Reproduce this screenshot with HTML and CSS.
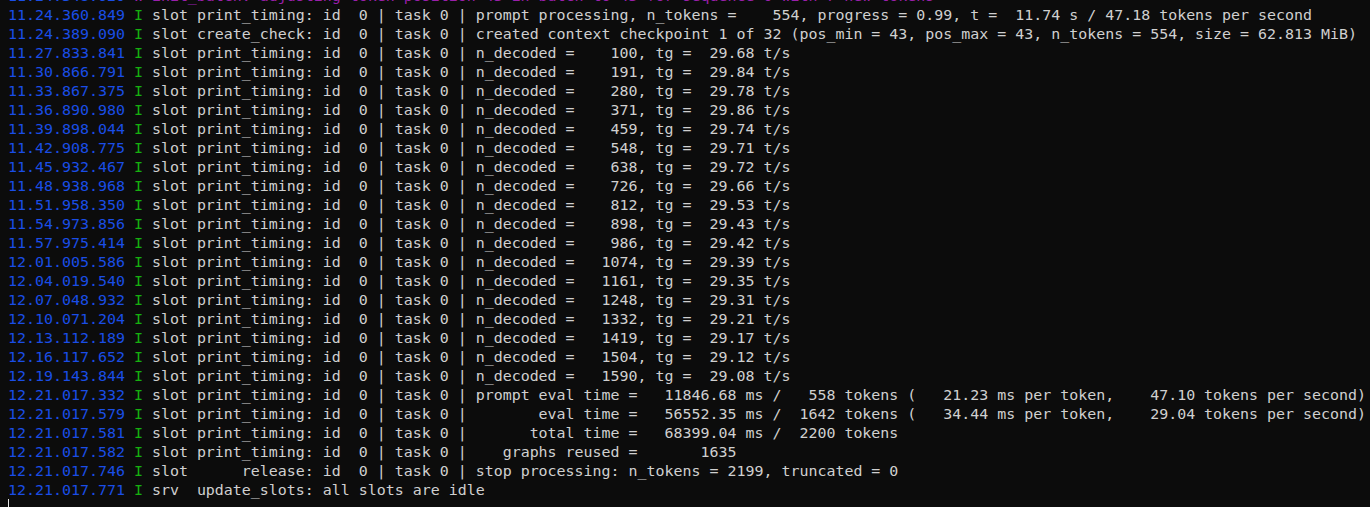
FILE: index.html
```html
<!DOCTYPE html>
<html>
<head>
<meta charset="utf-8">
<link rel="stylesheet" href="styles.css">
</head>
<body>
<div class="term">
<div class="line warn"><span class="ts">11.24.348.620</span> W init_batch: adjusting token position 43 in batch to 43 for sequence 0 with 7 new tokens</div>
<div class="line"><span class="ts">11.24.360.849</span> <span class="lvl">I</span> slot print_timing: id  0 | task 0 | prompt processing, n_tokens =    554, progress = 0.99, t =  11.74 s / 47.18 tokens per second</div>
<div class="line"><span class="ts">11.24.389.090</span> <span class="lvl">I</span> slot create_check: id  0 | task 0 | created context checkpoint 1 of 32 (pos_min = 43, pos_max = 43, n_tokens = 554, size = 62.813 MiB)</div>
<div class="line"><span class="ts">11.27.833.841</span> <span class="lvl">I</span> slot print_timing: id  0 | task 0 | n_decoded =    100, tg =  29.68 t/s</div>
<div class="line"><span class="ts">11.30.866.791</span> <span class="lvl">I</span> slot print_timing: id  0 | task 0 | n_decoded =    191, tg =  29.84 t/s</div>
<div class="line"><span class="ts">11.33.867.375</span> <span class="lvl">I</span> slot print_timing: id  0 | task 0 | n_decoded =    280, tg =  29.78 t/s</div>
<div class="line"><span class="ts">11.36.890.980</span> <span class="lvl">I</span> slot print_timing: id  0 | task 0 | n_decoded =    371, tg =  29.86 t/s</div>
<div class="line"><span class="ts">11.39.898.044</span> <span class="lvl">I</span> slot print_timing: id  0 | task 0 | n_decoded =    459, tg =  29.74 t/s</div>
<div class="line"><span class="ts">11.42.908.775</span> <span class="lvl">I</span> slot print_timing: id  0 | task 0 | n_decoded =    548, tg =  29.71 t/s</div>
<div class="line"><span class="ts">11.45.932.467</span> <span class="lvl">I</span> slot print_timing: id  0 | task 0 | n_decoded =    638, tg =  29.72 t/s</div>
<div class="line"><span class="ts">11.48.938.968</span> <span class="lvl">I</span> slot print_timing: id  0 | task 0 | n_decoded =    726, tg =  29.66 t/s</div>
<div class="line"><span class="ts">11.51.958.350</span> <span class="lvl">I</span> slot print_timing: id  0 | task 0 | n_decoded =    812, tg =  29.53 t/s</div>
<div class="line"><span class="ts">11.54.973.856</span> <span class="lvl">I</span> slot print_timing: id  0 | task 0 | n_decoded =    898, tg =  29.43 t/s</div>
<div class="line"><span class="ts">11.57.975.414</span> <span class="lvl">I</span> slot print_timing: id  0 | task 0 | n_decoded =    986, tg =  29.42 t/s</div>
<div class="line"><span class="ts">12.01.005.586</span> <span class="lvl">I</span> slot print_timing: id  0 | task 0 | n_decoded =   1074, tg =  29.39 t/s</div>
<div class="line"><span class="ts">12.04.019.540</span> <span class="lvl">I</span> slot print_timing: id  0 | task 0 | n_decoded =   1161, tg =  29.35 t/s</div>
<div class="line"><span class="ts">12.07.048.932</span> <span class="lvl">I</span> slot print_timing: id  0 | task 0 | n_decoded =   1248, tg =  29.31 t/s</div>
<div class="line"><span class="ts">12.10.071.204</span> <span class="lvl">I</span> slot print_timing: id  0 | task 0 | n_decoded =   1332, tg =  29.21 t/s</div>
<div class="line"><span class="ts">12.13.112.189</span> <span class="lvl">I</span> slot print_timing: id  0 | task 0 | n_decoded =   1419, tg =  29.17 t/s</div>
<div class="line"><span class="ts">12.16.117.652</span> <span class="lvl">I</span> slot print_timing: id  0 | task 0 | n_decoded =   1504, tg =  29.12 t/s</div>
<div class="line"><span class="ts">12.19.143.844</span> <span class="lvl">I</span> slot print_timing: id  0 | task 0 | n_decoded =   1590, tg =  29.08 t/s</div>
<div class="line"><span class="ts">12.21.017.332</span> <span class="lvl">I</span> slot print_timing: id  0 | task 0 | prompt eval time =   11846.68 ms /   558 tokens (   21.23 ms per token,    47.10 tokens per second)</div>
<div class="line"><span class="ts">12.21.017.579</span> <span class="lvl">I</span> slot print_timing: id  0 | task 0 |        eval time =   56552.35 ms /  1642 tokens (   34.44 ms per token,    29.04 tokens per second)</div>
<div class="line"><span class="ts">12.21.017.581</span> <span class="lvl">I</span> slot print_timing: id  0 | task 0 |       total time =   68399.04 ms /  2200 tokens</div>
<div class="line"><span class="ts">12.21.017.582</span> <span class="lvl">I</span> slot print_timing: id  0 | task 0 |    graphs reused =       1635</div>
<div class="line"><span class="ts">12.21.017.746</span> <span class="lvl">I</span> slot      release: id  0 | task 0 | stop processing: n_tokens = 2199, truncated = 0</div>
<div class="line"><span class="ts">12.21.017.771</span> <span class="lvl">I</span> srv  update_slots: all slots are idle</div>
<div class="line"><span class="cursor"></span></div>
</div>
</body>
</html>
```
FILE: styles.css
```css
html, body {
  margin: 0;
  padding: 0;
  background: #0c0c0c;
  overflow: hidden;
}

.term {
  margin-top: -13px;
  padding-left: 8px;
  font-family: "DejaVu Sans Mono", "Liberation Mono", monospace;
  font-size: 14.95px;
  color: #d0d0d0;
}

.line {
  height: 19px;
  line-height: 19px;
  white-space: pre;
}

.ts {
  color: #1a4ee6;
}

.lvl {
  color: #16b010;
}

.warn {
  color: #9a1fab;
}

.cursor {
  display: inline-block;
  width: 1px;
  height: 19px;
  margin-top: -1px;
  vertical-align: top;
  background: #e8e8e8;
}
```
